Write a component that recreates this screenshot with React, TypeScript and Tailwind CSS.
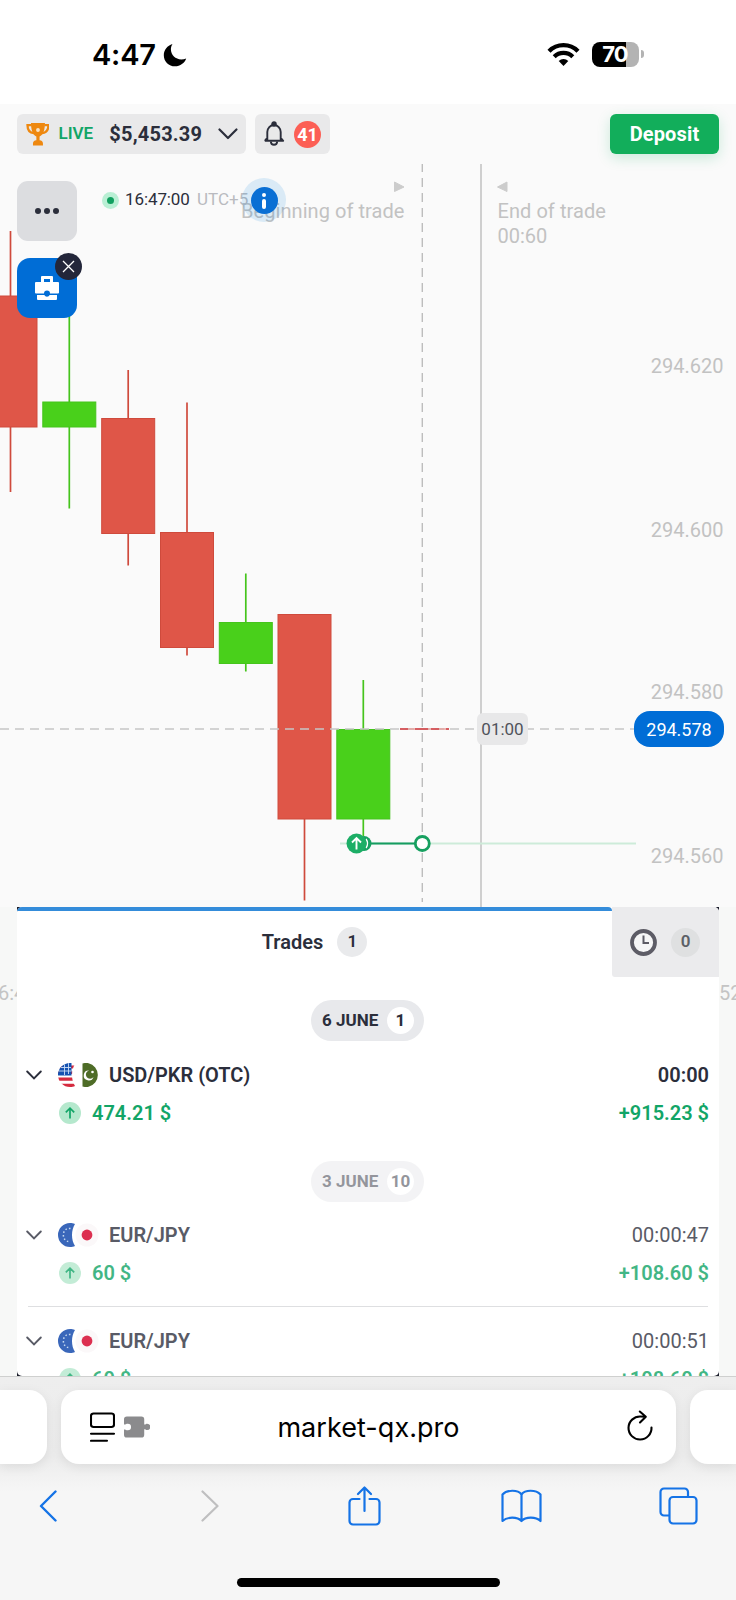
import type { ReactNode } from 'react';

interface Candle {
  x: number;
  open: number;
  close: number;
  high: number;
  low: number;
  color: 'red' | 'green';
}

interface Trade {
  pair: string;
  time: string;
  amount: string;
  profit: string;
  flags: 'usd-pkr' | 'eur-jpy';
}

const RED = '#df5648';
const GREEN = '#49d01b';
const RED_WICK = '#cf4a3c';
const GREEN_WICK = '#45c41c';

// coordinates are relative to the chart area, which starts below the header
const candles: Candle[] = [
  { x: 10.5, open: 131.5, close: 263.5, high: 67, low: 328, color: 'red' },
  { x: 69.3, open: 237.5, close: 263.5, high: 140, low: 344.5, color: 'green' },
  { x: 128.2, open: 254, close: 370, high: 206, low: 401.5, color: 'red' },
  { x: 187, open: 368, close: 484, high: 238.5, low: 491.5, color: 'red' },
  { x: 245.8, open: 458, close: 500, high: 409.5, low: 507.5, color: 'green' },
  { x: 304.5, open: 450, close: 655.5, high: 450, low: 736.5, color: 'red' },
  { x: 363.3, open: 565, close: 655.5, high: 516, low: 672, color: 'green' },
];

const priceLabels = [
  { y: 208.5, text: '294.620' },
  { y: 372.5, text: '294.600' },
  { y: 535, text: '294.580' },
  { y: 699, text: '294.560' },
];

const tradesToday: Trade[] = [
  { pair: 'USD/PKR (OTC)', time: '00:00', amount: '474.21 $', profit: '+915.23 $', flags: 'usd-pkr' },
];

const tradesOld: Trade[] = [
  { pair: 'EUR/JPY', time: '00:00:47', amount: '60 $', profit: '+108.60 $', flags: 'eur-jpy' },
  { pair: 'EUR/JPY', time: '00:00:51', amount: '60 $', profit: '+108.60 $', flags: 'eur-jpy' },
];

export default function App() {
  return (
    <div className="w-[736px] h-[1600px] flex flex-col overflow-hidden bg-white font-[Roboto,sans-serif] text-[#2b2e3b]">
      <StatusBar />
      <main className="h-[1272px] flex flex-col overflow-hidden bg-[#fafafa]">
        <Header />
        <Chart />
        <TradesArea />
      </main>
      <BrowserBar />
    </div>
  );
}

function StatusBar() {
  return (
    <div className="h-[104px] shrink-0 flex items-start justify-between pl-[92px] pr-[92px] pt-[39px] text-black">
      <div className="flex items-center h-8">
        <span className="w-[71px] font-[Inter,sans-serif] font-semibold text-[29px] leading-8 tracking-[-0.200px]">4:47</span>
        <svg width="24" height="24" viewBox="0 0 24 24">
          <path d="M9.5 1C4.4 2.6.8 7 .8 12.2.8 18.500 5.800 23.300 12 23.300c5.200 0 9.600-3.200 11.200-7.800-1.600.6-3.200.9-4.900.9C12.500 16.400 7.900 12 7.900 6.300c0-1.900.6-3.700 1.600-5.300Z" fill="currentColor" />
        </svg>
      </div>
      <div className="flex items-center gap-3 h-8 -mt-px">
        <svg width="33" height="24" viewBox="0 0 33 24" className="-mt-px">
          <g fill="none" stroke="currentColor" strokeWidth="4.300">
            <path d="M2 9.200a20.500 20.500 0 0 1 29 0" />
            <path d="M7.200 14.700a13.300 13.300 0 0 1 18.600 0" />
          </g>
          <path d="M11.700 19a7 7 0 0 1 9.600 0L16.500 24Z" fill="currentColor" />
        </svg>
        <div className="flex items-center gap-[2px]">
          <div className="w-[47px] h-[25px] rounded-[8px] bg-[linear-gradient(90deg,#000_0_34px,#b3b3b3_34px)] flex items-center justify-center">
            <span className="-ml-px font-[Inter,sans-serif] font-bold text-[22px] leading-none text-white tracking-[-1px]">70</span>
          </div>
          <div className="w-[3px] h-2 rounded-r-full bg-[#b3b3b3]" />
        </div>
      </div>
    </div>
  );
}

function Header() {
  return (
    <header className="h-[60px] shrink-0 flex items-start pt-[10px] pl-[16.500px] pr-[17px]">
      <button className="w-[229.500px] h-10 rounded-[6px] bg-[#e9e9ea] flex items-center pl-[9px] pr-2">
        <Trophy />
        <span className="ml-[9px] w-[50px] text-[17px] font-semibold text-[#12a567] text-left">LIVE</span>
        <span className="ml-px w-[109px] text-[20px] font-bold text-left tracking-[0.200px]">$5,453.39</span>
        <svg width="20" height="12" viewBox="0 0 20 12" fill="none" stroke="currentColor" strokeWidth="2.200" strokeLinecap="round" strokeLinejoin="round">
          <path d="M1.500 1.500 10 10l8.500-8.500" />
        </svg>
      </button>
      <button className="ml-[9px] w-[75px] h-10 rounded-[6px] bg-[#e9e9ea] flex items-center pl-[8px]">
        <svg width="22" height="26" viewBox="0 0 22 26" fill="none" stroke="#2b2e3b" strokeWidth="1.900" strokeLinejoin="round">
          <circle cx="11" cy="3" r="1.800" fill="#2b2e3b" />
          <path d="M4.300 19.200V11a6.700 7 0 0 1 13.400 0v8.200M1.800 19.800h18.400l-2.500-3M1.800 19.800l2.500-3" />
          <path d="M7.800 20.500c.2 4.400 6.200 4.400 6.400 0" />
        </svg>
        <span className="ml-[9px] size-[27px] rounded-full bg-[#fc5f55] text-white text-[18px] font-bold flex items-center justify-center">41</span>
      </button>
      <button className="ml-auto w-[109px] h-10 rounded-[6px] bg-[#12ae5b] text-white text-[20px] font-bold tracking-[0.150px] shadow-[0_4px_14px_rgba(15,170,95,0.200)]">
        Deposit
      </button>
    </header>
  );
}

function Trophy() {
  return (
    <svg width="24" height="24" viewBox="0 0 24 24" fill="#ee8810">
      <path d="M5 1h14c0 7-1.800 12-5.400 13.600v3.600c2.200.3 3.400 1.400 3.400 3.300V23.500H7v-2c0-1.900 1.200-3 3.400-3.300v-3.600C6.800 13 5 8 5 1Z" />
      <path d="M5.500 3.200h-4c0 4.500 2 7.500 6.500 8M18.500 3.200h4c0 4.500-2 7.500-6.500 8" fill="none" stroke="#ee8810" strokeWidth="2.300" />
      <circle cx="12" cy="8" r="1.900" fill="#f8e3c6" />
    </svg>
  );
}

function Chart() {
  return (
    <section className="relative h-[743px] shrink-0">
      <svg width="736" height="743" viewBox="0 0 736 743" className="block">
        <path d="M422.300 -1V738" stroke="#bdbdbd" strokeWidth="1.400" strokeDasharray="9 6" />
        <path d="M481 0V743" stroke="#c0c0c0" strokeWidth="1.500" />

        {candles.map((c) => (
          <g key={c.x}>
            <path d={`M${c.x} ${c.high}V${c.low}`} stroke={c.color === 'red' ? RED_WICK : GREEN_WICK} strokeWidth="1.700" />
            <rect
              x={c.x - 26.5}
              y={c.open + 0.5}
              width="53"
              height={c.close - c.open - 1}
              fill={c.color === 'red' ? RED : GREEN}
              stroke={c.color === 'red' ? RED_WICK : GREEN_WICK}
              strokeWidth="1"
            />
          </g>
        ))}

        {/* current price */}
        <path d="M0 565H634" stroke="#c6c6c6" strokeWidth="1.700" strokeDasharray="9 6" />
        <path d="M400 565H449" stroke="#e6a09c" strokeWidth="1.500" />
        <path d="M400 565H449" stroke="#cf4348" strokeWidth="1.700" strokeDasharray="8 7 13 3" />

        {/* open trade */}
        <path d="M340 679.500H636" stroke="#cdebd9" strokeWidth="2" />
        <path d="M364 679.500H416" stroke="#159c60" strokeWidth="2.200" />
        <circle cx="364" cy="679.500" r="7.500" fill="#17a162" />
        <path d="M366 675q3 4.500 0 9" fill="none" stroke="#fff" strokeWidth="1.500" />
        <circle cx="356.500" cy="679.500" r="10" fill="#1cae66" />
        <path d="M356.500 685.500v-11.500M352 678.500l4.500-4.500 4.500 4.500" fill="none" stroke="#fff" strokeWidth="1.900" />
        <circle cx="422.300" cy="679.500" r="7" fill="#fff" stroke="#17a060" strokeWidth="2.800" />

        <path d="M394.500 18v9.500l9.500-4.500Z" fill="#cccccc" stroke="#cccccc" strokeLinejoin="round" />
        <path d="M507 18v9.500l-9.500-4.500Z" fill="#cccccc" stroke="#cccccc" strokeLinejoin="round" />

        <g fontFamily="Roboto" fontSize="20" fill="#c2c2c2">
          <text x="404.500" y="54" textAnchor="end" letterSpacing="0.060">Beginning of trade</text>
          <text x="497.500" y="54" letterSpacing="0.060">End of trade</text>
          <text x="497.500" y="79">00:60</text>
          {priceLabels.map((p) => (
            <text key={p.text} x="723.500" y={p.y} textAnchor="end">{p.text}</text>
          ))}
        </g>
      </svg>

      <span className="absolute left-[477px] top-[549px] w-[51px] h-8 rounded-[6px] bg-[#e8e8e9] text-[#50535b] text-[17px] flex items-center justify-center pt-px">01:00</span>
      <span className="absolute left-[634px] top-[547px] w-[90px] h-9 rounded-[16px] bg-[#006dd6] text-white text-[18px] flex items-center justify-center">294.578</span>

      {/* chart tools */}
      <div className="absolute left-[17px] top-[17px] flex flex-col gap-[17px]">
        <button className="size-[60px] rounded-[11px] bg-[#dcdde0] flex items-center justify-center gap-[3px]">
          <i className="size-[6px] rounded-full bg-[#2b2e3b]" />
          <i className="size-[6px] rounded-full bg-[#2b2e3b]" />
          <i className="size-[6px] rounded-full bg-[#2b2e3b]" />
        </button>
        <button className="relative size-[60px] rounded-[13px] bg-[#006dd6] flex items-center justify-center">
          <svg width="24" height="24" viewBox="0 0 24 24" fill="#fff">
            <path fillRule="evenodd" d="M7 0h10a1 1 0 0 1 1 1v5h5a1 1 0 0 1 1 1v9.500a1 1 0 0 1-1 1h-8a3 3 0 0 0-6 0H1a1 1 0 0 1-1-1V7a1 1 0 0 1 1-1h5V1a1 1 0 0 1 1-1ZM9 3v3h6V3Z" />
            <path d="M2 19h7.300a3 3 0 0 0 5.400 0H22v4a1 1 0 0 1-1 1H3a1 1 0 0 1-1-1Z" />
          </svg>
          <span className="absolute -top-[5px] left-[38px] size-[27px] rounded-full bg-[#23263a] flex items-center justify-center">
            <svg width="13" height="13" viewBox="0 0 13 13" stroke="#fff" strokeWidth="1.300">
              <path d="M1 1l11 11M12 1 1 12" />
            </svg>
          </span>
        </button>
      </div>

      {/* server clock */}
      <div className="absolute left-[102px] top-[14px] h-11 flex items-center">
        <span className="size-[17px] rounded-full bg-[#b9efd4] flex items-center justify-center">
          <i className="size-[7px] rounded-full bg-[#119f5f]" />
        </span>
        <span className="ml-[6px] w-[72px] text-[17px] tracking-[-0.100px]">16:47:00</span>
        <span className="w-[45px] text-[17px] text-[#b9babf]">UTC+5</span>
        <span className="size-11 rounded-full bg-[#0a85e0]/13 flex items-center justify-center">
          <span className="size-[27px] rounded-full bg-[#0a6fd4] flex flex-col items-center pt-[6px] gap-[2px]">
            <i className="size-[4px] rounded-full bg-white" />
            <i className="w-[3.500px] h-[10px] rounded-full bg-white" />
          </span>
        </span>
      </div>
    </section>
  );
}

function TradesArea() {
  return (
    <div className="flex-1 flex overflow-hidden">
      <SideStrip>
        <span className="-ml-[2px] text-[20px] text-[#c4c4c4] whitespace-nowrap">6:4</span>
      </SideStrip>
      <div className="w-[702px] h-[469px] shrink-0 bg-[#1c1e2c]">
        <section className="h-[469px] flex flex-col bg-white overflow-hidden rounded-[5px]">
          <div className="flex h-[70px] shrink-0">
            <div className="w-[595px] border-t-4 border-[#348cda] rounded-tr-[4px] flex items-center justify-center pb-1 text-[20px] font-semibold">
              Trades
              <span className="ml-[14px] size-[30px] rounded-full bg-[#e9eaec] text-[17px] flex items-center justify-center">1</span>
            </div>
            <div className="w-[107px] rounded-bl-[3px] bg-[#ebebed] flex items-center pl-[18px]">
              <svg width="27" height="27" viewBox="0 0 27 27" fill="none">
                <circle cx="13.500" cy="13.500" r="11.500" fill="#f6f6f7" stroke="#5d5c66" strokeWidth="3.800" />
                <path d="M13.500 6.500V14H19" stroke="#5d5c66" strokeWidth="2" />
              </svg>
              <span className="ml-[14px] size-[29px] rounded-full bg-[#dfe0e1] text-[17px] font-semibold text-[#5c6066] flex items-center justify-center">0</span>
            </div>
          </div>
          <DateBadge label="6 JUNE" count="1" className="mt-[23px]" />
          {tradesToday.map((t) => (
            <TradeRow key={t.time} trade={t} className="mt-[22px]" active />
          ))}
          <DateBadge label="3 JUNE" count="10" className="mt-9 opacity-50" />
          {tradesOld.map((t, idx) => (
            <div key={t.time} className="shrink-0">
              {idx > 0 && <div className="mt-[21px] ml-[11px] mr-[11px] h-px bg-[#dedfe1]" />}
              <TradeRow trade={t} className={idx > 0 ? 'mt-[22px]' : 'mt-[21px]'} />
            </div>
          ))}
        </section>
      </div>
      <SideStrip>
        <span className="text-[20px] text-[#c4c4c4] whitespace-nowrap">52</span>
      </SideStrip>
    </div>
  );
}

function SideStrip({ children }: { children: ReactNode }) {
  return <div className="w-[17px] shrink-0 overflow-hidden flex items-start pt-[71px] bg-[#f7f8f7]">{children}</div>;
}

function DateBadge({ label, count, className }: { label: string; count: string; className: string }) {
  return (
    <div className={`ml-[294px] w-[113px] h-[41px] shrink-0 rounded-full bg-[#e8e9ec] flex items-center justify-between pl-[11px] pr-[10px] text-[17px] font-bold ${className}`}>
      {label}
      <span className="size-[27px] rounded-full bg-white flex items-center justify-center">{count}</span>
    </div>
  );
}

function TradeRow({ trade, className, active }: { trade: Trade; className: string; active?: boolean }) {
  return (
    <div className={`h-[62px] shrink-0 pl-[9px] pr-[10px] flex flex-col gap-[14px] text-[20px] leading-6 ${className}`}>
      <div className={`flex items-center h-6 ${active ? '' : 'text-[#595b66]'}`}>
        <svg width="16" height="10" viewBox="0 0 16 10" fill="none" stroke="currentColor" strokeWidth="1.900" strokeLinecap="round">
          <path d="M1.200 1.500 8 8.300l6.800-6.800" />
        </svg>
        <span className="ml-[16px] w-[51px]">{trade.flags === 'usd-pkr' ? <UsdPkr /> : <EurJpy />}</span>
        <span className="font-semibold">{trade.pair}</span>
        <span className={`ml-auto ${active ? 'font-semibold' : ''}`}>{trade.time}</span>
      </div>
      <div className={`flex items-center h-6 pl-[33px] font-semibold text-[#12a567] ${active ? '' : 'opacity-80'}`}>
        <span className="size-[22px] rounded-full bg-[#b5e8cd] flex items-center justify-center">
          <svg width="12" height="12" viewBox="0 0 12 12" fill="none" stroke="#12a567" strokeWidth="1.700">
            <path d="M6 11.500V1.200M1.800 5.400 6 1.200l4.200 4.200" />
          </svg>
        </span>
        <span className="ml-[11px]">{trade.amount}</span>
        <span className="ml-auto">{trade.profit}</span>
      </div>
    </div>
  );
}

function UsdPkr() {
  return (
    <svg width="42" height="24" viewBox="0 0 42 24">
      <clipPath id="usd">
        <path d="M12 0c2 0 3 .3 5 1-4 6-4 16 0 22-1.500.7-3 1-5 1A12 12 0 0 1 12 0Z" />
      </clipPath>
      <g clipPath="url(#usd)">
        <rect width="18" height="24" fill="#fff" />
        <path d="M0 2.500h18v3H0zM0 8.500h18v2.500H0zM0 14.500h18v3.200H0zM0 20.800h18V24H0z" fill="#d52b3f" />
        <rect width="13.500" height="12.500" fill="#1552b0" />
        <path d="M3 4.500h10M1 8h12M6.500 1v11M10.500 0v11" stroke="#c9dcf6" strokeWidth=".9" />
      </g>
      <path d="M23 .5c2-.7 4-.7 6-.2a12 12 0 0 1 0 23.400c-2 .5-4 .5-6-.2Z" transform="translate(1.500 0)" fill="#4e6c27" />
      <path d="M31 7.500a5 5 0 1 0 4.500 6.500 4.200 4.200 0 1 1-4.500-6.500Z" fill="#fff" />
      <circle cx="34.500" cy="9" r="1.300" fill="#fff" />
    </svg>
  );
}

function EurJpy() {
  return (
    <svg width="41" height="24" viewBox="0 0 41 24">
      <path d="M12 0c2 0 3 .3 5 1-4 6-4 16 0 22-1.500.7-3 1-5 1A12 12 0 0 1 12 0Z" fill="#3a67ba" />
      <path d="M12.500 5.500C3 4 3 20 12.500 18.500" fill="none" stroke="#c5d9f0" strokeWidth="1.500" strokeDasharray="1.500 2.200" />
      <circle cx="29" cy="12" r="11.500" fill="#fbf8f9" />
      <circle cx="29" cy="12" r="5.400" fill="#dc2f50" />
    </svg>
  );
}

function BrowserBar() {
  const pill = 'h-[74px] bg-white shadow-[0_3px_12px_rgba(0,0,0,0.080)]';
  return (
    <footer className="h-[224px] shrink-0 border-t border-[#cfd0cf] bg-[linear-gradient(180deg,#eeeeee_0,#ececec_80px,#f6f6f6_115px)] flex flex-col">
      <div className="mt-[13px] flex justify-between">
        <div className={`w-[46.500px] rounded-r-[18px] ${pill}`} />
        <div className={`w-[615px] rounded-[18px] flex items-center pl-[29px] pr-[23px] ${pill}`}>
          <svg width="25" height="31" viewBox="0 0 25 31" fill="none" stroke="#000" strokeWidth="2.100" strokeLinecap="round">
            <rect x="1" y="1.500" width="23" height="13.500" rx="2.500" />
            <path d="M1 21.700h23M1 28.800h16" />
          </svg>
          <svg width="26" height="22" viewBox="0 0 27 22" className="ml-[9px]" fill="#8b8b8d">
            <path d="M3 0h15a3 3 0 0 1 3 3v5.300c1.600 0 1.800-.8 3-.8a3.300 3.300 0 0 1 0 6.600c-1.200 0-1.400-.8-3-.8V19a3 3 0 0 1-3 3H3a3 3 0 0 1-3-3v-5.500c1.800 0 2.200.8 4 .8a3.300 3.300 0 0 0 0-6.600c-1.800 0-2.200.8-4 .8V3a3 3 0 0 1 3-3Z" />
          </svg>
          <span className="flex-1 pl-[2px] pr-[41px] pt-[3px] text-center font-[Inter,sans-serif] text-[27px] tracking-[0.050px] text-black">market-qx.pro</span>
          <svg width="26" height="31" viewBox="0 0 26 31" className="-mt-1" fill="none" stroke="#000" strokeWidth="2.100" strokeLinecap="round" strokeLinejoin="round">
            <path d="M13.500 6.500A11.500 11.500 0 1 0 24.500 17.500M12.800 1.500l6 5.300-5.800 5.700M13.500 6.500l5 .3" />
          </svg>
        </div>
        <div className={`w-[46.500px] rounded-l-[18px] ${pill}`} />
      </div>
      <nav className="mt-[22px] h-10 flex items-center pl-[39px] text-[#1573e6]">
        <svg width="18" height="32" viewBox="0 0 18 32" fill="none" stroke="currentColor" strokeWidth="2.400" strokeLinecap="round" strokeLinejoin="round">
          <path d="M16.500 1.500 2 16l14.500 14.500" />
        </svg>
        <svg width="18" height="32" viewBox="0 0 18 32" className="ml-[144px]" fill="none" stroke="#bfbfc0" strokeWidth="2.200" strokeLinecap="round" strokeLinejoin="round">
          <path d="M1.500 1.500 16.500 16 1.500 30.500" />
        </svg>
        <svg width="33" height="40" viewBox="0 0 33 40" className="ml-[129px]" fill="none" stroke="currentColor" strokeWidth="2.200" strokeLinecap="round" strokeLinejoin="round">
          <path d="M11.500 13H5a3.500 3.500 0 0 0-3.500 3.500v18.500A3.500 3.500 0 0 0 5 38.500h23a3.500 3.500 0 0 0 3.500-3.500V16.500A3.500 3.500 0 0 0 28 13h-6.500M16.500 25V1.500M10 8l6.500-6.500L23 8" />
        </svg>
        <svg width="41" height="34" viewBox="0 0 41 34" className="ml-[120px]" fill="none" stroke="currentColor" strokeWidth="2.200" strokeLinejoin="round">
          <path d="M20.500 5.500C17 .5 6 .5 1.500 5.500v26.500c4.500-4.500 15-4.500 19 0 4-4.500 14.500-4.500 19 0V5.500C35 .5 24 .5 20.500 5.500Zm0 0V32" />
        </svg>
        <svg width="39" height="38" viewBox="0 0 39 38" className="ml-[117px]" fill="none" stroke="currentColor" strokeWidth="2.200">
          <rect x="10.500" y="10" width="27" height="26.500" rx="3.500" />
          <path d="M10 28.500H5A3.500 3.500 0 0 1 1.500 25V5A3.500 3.500 0 0 1 5 1.500h20.500A3.500 3.500 0 0 1 29 5v4.500" />
        </svg>
      </nav>
      <div className="mt-[52px] self-center w-[263px] h-[9px] rounded-full bg-black" />
    </footer>
  );
}
